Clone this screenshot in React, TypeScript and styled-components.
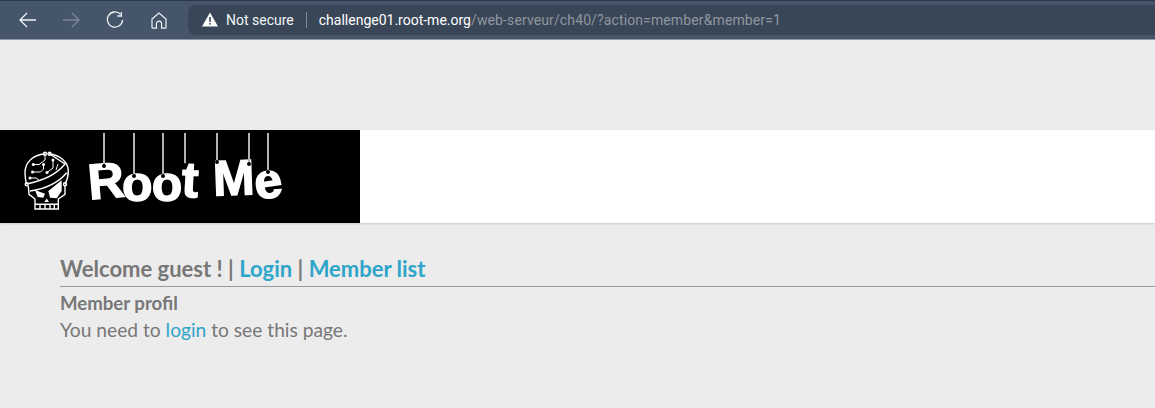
import React from 'react'
import styled, { createGlobalStyle } from 'styled-components'

const GlobalStyle = createGlobalStyle`
  html, body {
    margin: 0;
    padding: 0;
    background: #ececec;
    overflow: hidden;
  }
`

const Page = styled.div`
  width: 1155px;
  height: 408px;
  background: #ececec;
  font-family: 'Lato', sans-serif;
  color: #777;
`

const Toolbar = styled.div`
  height: 40px;
  box-sizing: border-box;
  display: flex;
  align-items: center;
  background: #45566b;
  border-top: 1px solid #2e3a48;
  border-bottom: 1px solid #8d97a4;
  padding-left: 17px;
`

const NavButton = styled.button<{ $gap?: number }>`
  width: 22px;
  height: 22px;
  padding: 0;
  margin-right: ${({ $gap }) => $gap ?? 21}px;
  border: 0;
  background: none;
  display: flex;
  align-items: center;
  justify-content: center;
`

const AddressBar = styled.div`
  flex: 1;
  height: 30px;
  margin-top: -1px;
  margin-left: 2px;
  display: flex;
  align-items: center;
  background: #394657;
  border-radius: 8px 0 0 8px;
  padding-left: 14px;
  font-family: 'Roboto', sans-serif;
  font-size: 14px;
`

const SecurityLabel = styled.span`
  color: #f2f4f6;
  margin-left: 8px;
`

const Divider = styled.span`
  width: 1px;
  height: 16px;
  background: #7f8a98;
  margin: 0 12px;
`

const Host = styled.span`
  color: #fff;
`

const UrlPath = styled.span`
  color: #8f979f;
  letter-spacing: 0.12px;
`

const Banner = styled.header`
  margin-top: 90px;
  height: 93px;
  background: #fff;
  box-shadow: 0 1px 2px rgba(0, 0, 0, 0.14);
`

const LogoBox = styled.div`
  width: 360px;
  height: 93px;
  box-sizing: border-box;
  background: #000;
  display: flex;
  align-items: flex-start;
  padding: 21px 0 0 24px;
`

const LogoWord = styled.div`
  position: relative;
  display: flex;
  margin-left: 18px;
  margin-top: 7px;
`

const Letter = styled.span<{ $rotate: number; $lift: number; $gap?: number }>`
  display: block;
  color: #fff;
  font-family: 'Liberation Sans', sans-serif;
  font-weight: 700;
  font-size: 50px;
  line-height: 44px;
  -webkit-text-stroke: 1.4px #fff;
  margin-right: ${({ $gap }) => $gap ?? 0}px;
  transform: translateY(${({ $lift }) => $lift}px) rotate(${({ $rotate }) => $rotate}deg);
`

// hanging threads sit over the letters, all starting at the same height
const Thread = styled.i<{ $x: number; $length: number }>`
  position: absolute;
  left: ${({ $x }) => $x}px;
  top: -25px;
  width: 2px;
  height: ${({ $length }) => $length}px;
  background: #b4b4b4;

  &::after {
    content: '';
    position: absolute;
    left: -1px;
    bottom: -3px;
    width: 4px;
    height: 4px;
    border-radius: 50%;
    background: #000;
  }
`

const Content = styled.main`
  padding: 31px 0 0 60px;
`

const Nav = styled.nav`
  font-size: 22px;
  line-height: 30px;
  padding-bottom: 2px;
  font-weight: 700;
  border-bottom: 1px solid #999;
`

const Link = styled.a`
  color: #2ea5c9;
  text-decoration: none;
`

const Title = styled.h2`
  margin: 4px 0 0;
  font-size: 18.6px;
  line-height: 24px;
  font-weight: 700;
`

const Message = styled.p`
  margin: 2px 0 0;
  font-size: 19.2px;
  line-height: 26px;
  font-weight: 400;
`

const ArrowIcon = ({ flip, color }: { flip?: boolean; color: string }) => (
  <svg width="18" height="16" viewBox="0 0 18 16" fill="none" stroke={color} strokeWidth="1.3">
    <path d={flip ? 'M1 8h16M10 1l7 7-7 7' : 'M17 8H1M8 1L1 8l7 7'} />
  </svg>
)

const ReloadIcon = () => (
  <svg width="18" height="18" viewBox="0 0 18 18" fill="none" stroke="#eef1f4" strokeWidth="1.3">
    <path d="M14.6 3.4A7.6 7.6 0 1 0 16.6 9" />
    <path d="M15.4 1v4h-4.2" />
  </svg>
)

const HomeIcon = () => (
  <svg width="16" height="17" viewBox="0 0 16 17" fill="none" stroke="#eef1f4" strokeWidth="1.2">
    <path d="M1 7l7-6 7 6v8.400a.8.8 0 0 1-.8.8H10.600v-4.500a2.600 2.600 0 0 0-5.200 0v4.500H1.800a.8.8 0 0 1-.8-.8z" />
  </svg>
)

const WarningIcon = () => (
  <svg width="16" height="15" viewBox="0 0 16 15">
    <path fill="#fff" d="M8 0.500L16 14.500H0z" />
    <rect x="7.200" y="5" width="1.600" height="5" fill="#394657" />
    <rect x="7.200" y="11" width="1.600" height="1.600" fill="#394657" />
  </svg>
)

const SkullLogo = () => (
  <svg width="46" height="60" viewBox="0 0 46 60" fill="none" stroke="#fff" strokeWidth="1.4">
    <path d="M21 2.700C9 4 1 11 1 21.700c0 4.300.6 8 1.700 11.600M25 2.700C36 4 44.300 11 44.300 20c0 5-1.300 9.500-3.300 13.300" />
    <circle cx="21" cy="2.700" r="1.500" />
    <circle cx="25.500" cy="2.700" r="1.500" />
    <circle cx="2.700" cy="33.300" r="1.500" />
    <circle cx="41" cy="33.300" r="1.500" />
    <path d="M3.700 32.700C17 30 32 24 41 13L26.500 3.500" />
    <path d="M6 40c14-2 28-8 36.700-18.300" />
    <path d="M4.300 35L5 43.300 11 48v10h23.300V48l6.700-4.700v-9" />
    <path d="M11 53.300h23.300M16 53.300V58M21 53.300V58M26 53.300V58M30.300 53.300V58" />
    <path d="M21 4v5l-6 4.500H9.300M8.500 21h8l3-3V14M6 27h6l3 2M29 9v8l-6 4.500M34 13l-2 6" strokeWidth="1" />
    <g fill="#fff" stroke="none">
      <circle cx="9.300" cy="13.500" r="1.500" />
      <circle cx="19.500" cy="13.500" r="1.500" />
      <circle cx="8.500" cy="21" r="1.500" />
      <circle cx="6" cy="27" r="1.500" />
      <circle cx="29" cy="9" r="1.500" />
      <circle cx="23" cy="21.500" r="1.500" />
      <path d="M24.300 40l13.400-10.700V40l-5 7.300-6.700-.6z" />
      <path d="M11 39l10 3.700-1.700 4-5.600-.7z" />
      <path d="M22.700 47.500l2.300 3.500h-4.600z" />
    </g>
  </svg>
)

const letters = [
  { char: 'R', rotate: -5, lift: 1, gap: -2 },
  { char: 'o', rotate: 0, lift: 4, gap: -1 },
  { char: 'o', rotate: 0, lift: 4, gap: 0 },
  { char: 't', rotate: 3, lift: 0, gap: 14 },
  { char: 'M', rotate: -2, lift: -2, gap: -1 },
  { char: 'e', rotate: -8, lift: 1, gap: 0 },
]

const threads = [
  { x: 15, length: 32 },
  { x: 45, length: 42 },
  { x: 74, length: 42 },
  { x: 96, length: 31 },
  { x: 128, length: 28 },
  { x: 160, length: 30 },
  { x: 179, length: 38 },
]

export default function App() {
  return (
    <Page>
      <GlobalStyle />
      <Toolbar>
        <NavButton>
          <ArrowIcon color="#f2f4f6" />
        </NavButton>
        <NavButton $gap={22}>
          <ArrowIcon flip color="#7b8899" />
        </NavButton>
        <NavButton $gap={22}>
          <ReloadIcon />
        </NavButton>
        <NavButton $gap={16}>
          <HomeIcon />
        </NavButton>
        <AddressBar>
          <WarningIcon />
          <SecurityLabel>Not secure</SecurityLabel>
          <Divider />
          <Host>challenge01.root-me.org</Host>
          <UrlPath>/web-serveur/ch40/?action=member&amp;member=1</UrlPath>
        </AddressBar>
      </Toolbar>
      <Banner>
        <LogoBox>
          <SkullLogo />
          <LogoWord>
            {letters.map((l, i) => (
              <Letter key={i} $rotate={l.rotate} $lift={l.lift} $gap={l.gap}>
                {l.char}
              </Letter>
            ))}
            {threads.map((t) => (
              <Thread key={t.x} $x={t.x} $length={t.length} />
            ))}
          </LogoWord>
        </LogoBox>
      </Banner>
      <Content>
        <Nav>
          Welcome guest ! | <Link href="#">Login</Link> | <Link href="#">Member list</Link>
        </Nav>
        <Title>Member profil</Title>
        <Message>
          You need to <Link href="#">login</Link> to see this page.
        </Message>
      </Content>
    </Page>
  )
}
